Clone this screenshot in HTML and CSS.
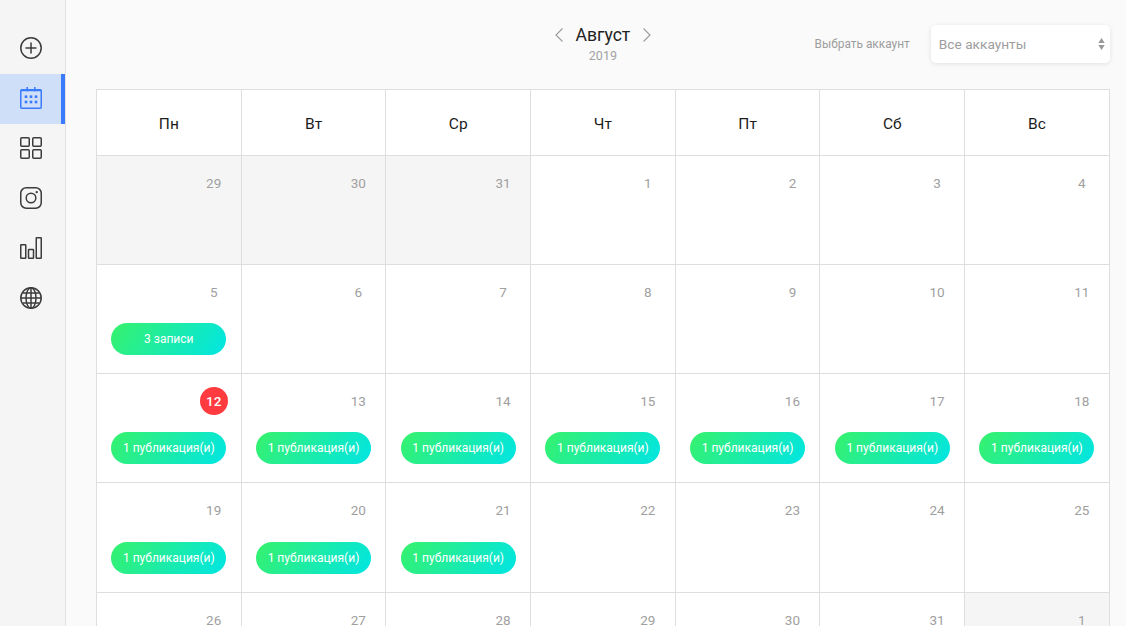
FILE: index.html
```html
<!DOCTYPE html>
<html lang="ru">
<head>
<meta charset="utf-8">
<title>Календарь</title>
<link rel="stylesheet" href="styles.css">
</head>
<body>
<div class="app">
  <nav class="sidebar">
    <a class="nav-item"><svg class="icon" viewBox="0 0 22 22"><circle cx="11" cy="11" r="10.2"/><path d="M11 5.5v11M5.5 11h11"/></svg></a>
    <a class="nav-item active"><svg class="icon" viewBox="0 0 22 22"><rect x=".75" y="2.75" width="20.5" height="18.5" rx="1"/><path d="M.75 3.6h20.5M7.2 0v4.5M14.8 0v4.5"/><g class="dots"><rect x="4.7" y="8.4" width="2.6" height="2.6"/><rect x="9.7" y="8.4" width="2.6" height="2.6"/><rect x="14.7" y="8.4" width="2.6" height="2.6"/><rect x="4.7" y="13.7" width="2.6" height="2.6"/><rect x="9.7" y="13.7" width="2.6" height="2.6"/><rect x="14.7" y="13.7" width="2.6" height="2.6"/></g></svg></a>
    <a class="nav-item"><svg class="icon" viewBox="0 0 22 22"><rect x=".75" y=".75" width="8.5" height="8.5" rx="1"/><rect x="12.75" y=".75" width="8.5" height="8.5" rx="1"/><rect x=".75" y="12.75" width="8.5" height="8.5" rx="1"/><rect x="12.75" y="12.75" width="8.5" height="8.5" rx="1"/></svg></a>
    <a class="nav-item"><svg class="icon" viewBox="0 0 22 22"><rect x=".75" y=".75" width="20.5" height="20.5" rx="5.5"/><circle cx="11" cy="11" r="4.8"/><circle class="dot" cx="16.7" cy="5.1" r="1.2"/></svg></a>
    <a class="nav-item"><svg class="icon" viewBox="0 0 22 22"><rect x=".75" y="7.75" width="5" height="13.5" rx=".5"/><rect x="8.5" y="12.5" width="5" height="8.75" rx=".5"/><rect x="16.25" y=".75" width="5" height="20.5" rx=".5"/></svg></a>
    <a class="nav-item"><svg class="icon" viewBox="0 0 22 22"><circle cx="11" cy="11" r="10.2"/><ellipse cx="11" cy="11" rx="5" ry="10.2"/><path d="M11 .8v20.4M.8 11h20.4M2.6 6h16.8M2.6 16h16.8"/></svg></a>
  </nav>
  <main class="main">
    <header class="topbar">
      <div class="topbar-side"></div>
      <div class="month">
        <div class="month-row">
          <svg class="chevron" viewBox="0 0 8 14"><path d="M7.5.5 1 7l6.5 6.5"/></svg>
          <span class="month-name">Август</span>
          <svg class="chevron" viewBox="0 0 8 14"><path d="M.5.5 7 7 .5 13.5"/></svg>
        </div>
        <div class="year">2019</div>
      </div>
      <div class="topbar-side account">
        <span class="account-label">Выбрать аккаунт</span>
        <div class="select">
          <span>Все аккаунты</span>
          <svg class="select-arrows" viewBox="0 0 7 12"><path d="M3.5 0l3.2 5H.3zM3.5 12 .3 7h6.4z"/></svg>
        </div>
      </div>
    </header>
    <section class="calendar">
      <div class="head">Пн</div><div class="head">Вт</div><div class="head">Ср</div><div class="head">Чт</div><div class="head">Пт</div><div class="head">Сб</div><div class="head">Вс</div>

      <div class="day muted"><span class="date">29</span></div>
      <div class="day muted"><span class="date">30</span></div>
      <div class="day muted"><span class="date">31</span></div>
      <div class="day"><span class="date">1</span></div>
      <div class="day"><span class="date">2</span></div>
      <div class="day"><span class="date">3</span></div>
      <div class="day"><span class="date">4</span></div>

      <div class="day"><span class="date">5</span><a class="pill">3 записи</a></div>
      <div class="day"><span class="date">6</span></div>
      <div class="day"><span class="date">7</span></div>
      <div class="day"><span class="date">8</span></div>
      <div class="day"><span class="date">9</span></div>
      <div class="day"><span class="date">10</span></div>
      <div class="day"><span class="date">11</span></div>

      <div class="day"><span class="date today">12</span><a class="pill">1 публикация(и)</a></div>
      <div class="day"><span class="date">13</span><a class="pill">1 публикация(и)</a></div>
      <div class="day"><span class="date">14</span><a class="pill">1 публикация(и)</a></div>
      <div class="day"><span class="date">15</span><a class="pill">1 публикация(и)</a></div>
      <div class="day"><span class="date">16</span><a class="pill">1 публикация(и)</a></div>
      <div class="day"><span class="date">17</span><a class="pill">1 публикация(и)</a></div>
      <div class="day"><span class="date">18</span><a class="pill">1 публикация(и)</a></div>

      <div class="day"><span class="date">19</span><a class="pill">1 публикация(и)</a></div>
      <div class="day"><span class="date">20</span><a class="pill">1 публикация(и)</a></div>
      <div class="day"><span class="date">21</span><a class="pill">1 публикация(и)</a></div>
      <div class="day"><span class="date">22</span></div>
      <div class="day"><span class="date">23</span></div>
      <div class="day"><span class="date">24</span></div>
      <div class="day"><span class="date">25</span></div>

      <div class="day"><span class="date">26</span></div>
      <div class="day"><span class="date">27</span></div>
      <div class="day"><span class="date">28</span></div>
      <div class="day"><span class="date">29</span></div>
      <div class="day"><span class="date">30</span></div>
      <div class="day"><span class="date">31</span></div>
      <div class="day muted"><span class="date">1</span></div>
    </section>
  </main>
</div>
</body>
</html>
```
FILE: styles.css
```css
* { box-sizing: border-box; }
html, body { margin: 0; height: 100%; overflow: hidden; }
body {
  font-family: "Roboto", "Noto Sans", sans-serif;
  background: #fafafa;
  color: #222;
}
.app { display: flex; height: 626px; overflow: hidden; }

.sidebar {
  flex: 0 0 66px;
  padding-top: 24px;
  background: #f5f5f5;
  border-right: 1px solid #e2e2e2;
  display: flex;
  flex-direction: column;
}
.nav-item {
  height: 50px;
  display: flex;
  align-items: center;
  padding: 0 0 2px 20px;
}
.nav-item.active {
  background: #cfdff8;
  border-right: 4px solid #3a7bfd;
}
.icon {
  width: 22px;
  height: 22px;
  display: block;
  fill: none;
  stroke: #3c3c3c;
  stroke-width: 1.5;
}
.icon .dot { fill: #3c3c3c; stroke: none; }
.active .icon { stroke: #3a7bfd; }
.active .icon .dots rect { fill: #3a7bfd; stroke: none; }

.main { flex: 1; min-width: 0; padding: 0 16.2px 0 30px; }

.topbar {
  height: 89px;
  display: grid;
  grid-template-columns: 1fr auto 1fr;
  align-items: start;
}
.month { padding-top: 24px; text-align: center; }
.month-row { display: flex; align-items: center; justify-content: center; gap: 12.5px; height: 22px; }
.month-name { font-size: 17.6px; color: #222; }
.chevron { width: 8px; height: 14px; fill: none; stroke: #9a9a9a; stroke-width: 1.1; }
.year { font-size: 12.5px; color: #a3a3a3; margin-top: 2px; }

.account {
  display: flex;
  justify-content: flex-end;
  align-items: center;
  gap: 21px;
  margin-top: 25px;
}
.account-label { font-size: 11.9px; color: #9d9d9d; }
.select {
  width: 179px;
  height: 38px;
  background: #fff;
  border-radius: 5px;
  box-shadow: 0 1px 5px rgba(0, 0, 0, .1);
  padding: 0 5px 1px 8px;
  display: flex;
  align-items: center;
  justify-content: space-between;
  font-size: 13.7px;
  color: #9d9d9d;
}
.select-arrows { width: 7px; height: 12px; fill: #999; }

.calendar {
  display: grid;
  grid-template-columns: repeat(7, 1fr);
  grid-template-rows: 66px repeat(5, 109.15px);
  background: #fff;
  border-top: 1px solid #dedede;
  border-left: 1px solid #dedede;
}
.head, .day {
  border-right: 1px solid #dedede;
  border-bottom: 1px solid #dedede;
}
.head {
  display: flex;
  align-items: center;
  justify-content: center;
  padding-top: 2px;
  font-size: 15.5px;
  font-weight: 400;
  color: #1c1c1c;
}
.day {
  padding: 13px 13px 0 14.3px;
  display: flex;
  flex-direction: column;
  align-items: flex-end;
}
.day.muted { background: #f5f5f5; }
.date {
  width: 28px;
  height: 28px;
  border-radius: 50%;
  display: flex;
  align-items: center;
  justify-content: center;
  font-size: 13.5px;
  color: #a0a0a0;
}
.date.today { background: #ff3b3f; color: #fff; font-weight: 500; }
.pill {
  align-self: flex-start;
  width: 115px;
  height: 32px;
  margin-top: 17.1px;
  border-radius: 16px;
  display: flex;
  align-items: center;
  justify-content: center;
  font-size: 12px;
  color: #fff;
  background: linear-gradient(125deg, #37f26b 0%, #00e5e5 100%);
}
```
